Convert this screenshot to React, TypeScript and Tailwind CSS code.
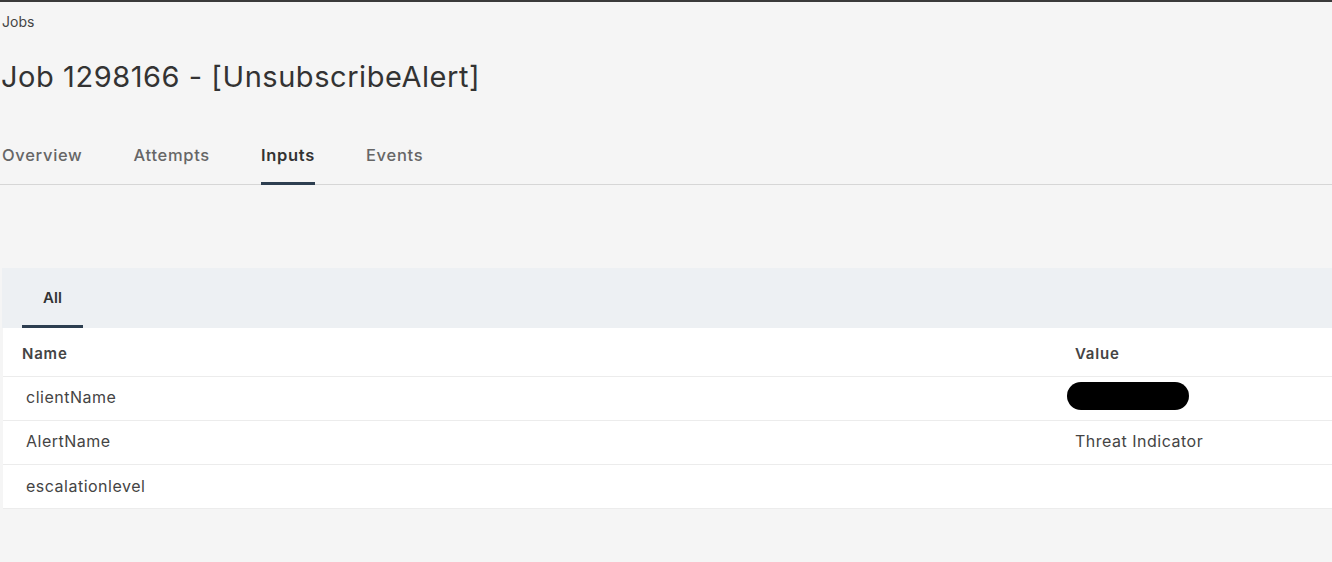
const rows = [
  { name: "clientName", value: null as string | null, redacted: true },
  { name: "AlertName", value: "Threat Indicator", redacted: false },
  { name: "escalationlevel", value: "", redacted: false },
];

const tabs = ["Overview", "Attempts", "Inputs", "Events"];

export default function App() {
  return (
    <div
      className="min-h-[562px] w-[1332px] bg-[#f5f5f5] text-[#333] border-t-2 border-[#3a3a3a]"
      style={{ fontFamily: "Inter, 'Noto Sans', sans-serif" }}
    >
      <div className="pl-[2px] pt-[10px] text-[14px] leading-[20px] text-[#444]">Jobs</div>

      <h1 className="pl-[1px] mt-[28px] text-[29px] leading-[34px] font-normal text-[#333] tracking-[0.55px]">
        Job 1298166 - [UnsubscribeAlert]
      </h1>

      <div className="mt-[50px] flex gap-[51px] pl-[2px] border-b border-[#d6d6d6]">
        {tabs.map((t) => (
          <div
            key={t}
            className={`pb-[16px] text-[16.5px] leading-[22px] tracking-[0.7px] border-b-[3px] -mb-px ${
              t === "Inputs"
                ? "border-[#2d3e50] text-[#333] font-semibold"
                : "border-transparent text-[#666] font-medium"
            }`}
          >
            {t}
          </div>
        ))}
      </div>

      <div className="mt-[83px] ml-[2px]">
        <div className="h-[60px] bg-[#edf0f3] flex items-end pl-[20px]">
          <div className="w-[61px] h-full flex items-center justify-center border-b-[3px] border-[#2d3e50] text-[15px] font-semibold text-[#333] pt-[3px]">
            All
          </div>
        </div>

        <div className="bg-white ml-[1px]">
          <div className="grid grid-cols-[1072px_1fr] h-[49px] items-center border-b border-[#ececec] text-[15px] tracking-[0.8px] font-semibold text-[#444] pt-[5px]">
            <div className="pl-[19px]">Name</div>
            <div>Value</div>
          </div>
          {rows.map((r, i) => (
            <div
              key={r.name}
              className={`grid grid-cols-[1072px_1fr] h-[44px] items-center border-b border-[#ececec] text-[16px] tracking-[0.5px] text-[#444] ${
                i === 2 ? "pb-[1px]" : "pb-[4px]"
              }`}
            >
              <div className="pl-[23px]">{r.name}</div>
              <div>
                {r.redacted ? (
                  <div className="-ml-[8px] -mt-[2px] w-[122px] h-[28px] rounded-full bg-black" />
                ) : (
                  r.value
                )}
              </div>
            </div>
          ))}
        </div>
      </div>
    </div>
  );
}
